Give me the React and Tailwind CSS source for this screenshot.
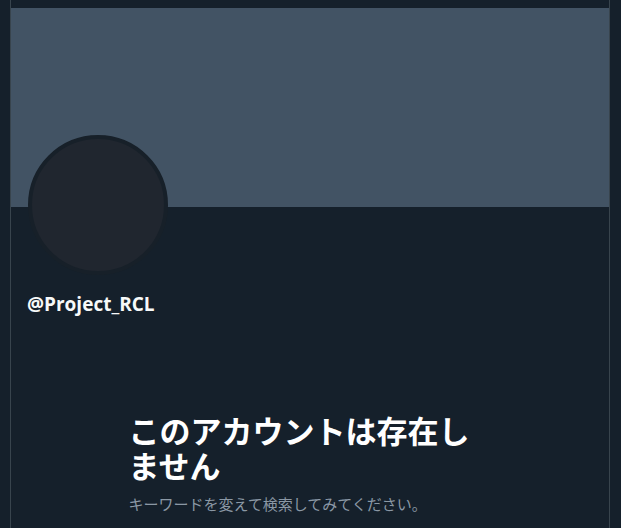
export default function App() {
  return (
    <div
      className="min-h-screen w-full bg-[#15202b] pl-[10px]"
      style={{ fontFamily: '"Open Sans", "Noto Sans CJK JP", sans-serif' }}
    >
      <div className="flex min-h-[528px] w-[600px] flex-col border-x border-[#38444d] pt-[8px]">
        <div className="h-[199px] bg-[#425364]" />
        <div className="px-4">
          <div className="ml-px -mt-[72px] h-[140px] w-[140px] rounded-full border-4 border-[#172029] bg-[#20262f]" />
          <div className="mt-[17px] text-[19px] font-bold leading-[24px] text-[#f7f9f9]">
            @Project_RCL
          </div>
        </div>
        <div className="mx-auto mt-[96px] w-[363px]">
          <h2
            className="text-[31px] font-bold leading-[35px] text-white"
            style={{ fontFamily: '"Noto Sans CJK JP", sans-serif' }}
          >
            このアカウントは存在しません
          </h2>
          <p
            className="mt-[12px] text-[15px] leading-[20px] text-[#8b98a5]"
            style={{ fontFamily: '"Noto Sans CJK JP", sans-serif' }}
          >
            キーワードを変えて検索してみてください。
          </p>
        </div>
      </div>
    </div>
  );
}
